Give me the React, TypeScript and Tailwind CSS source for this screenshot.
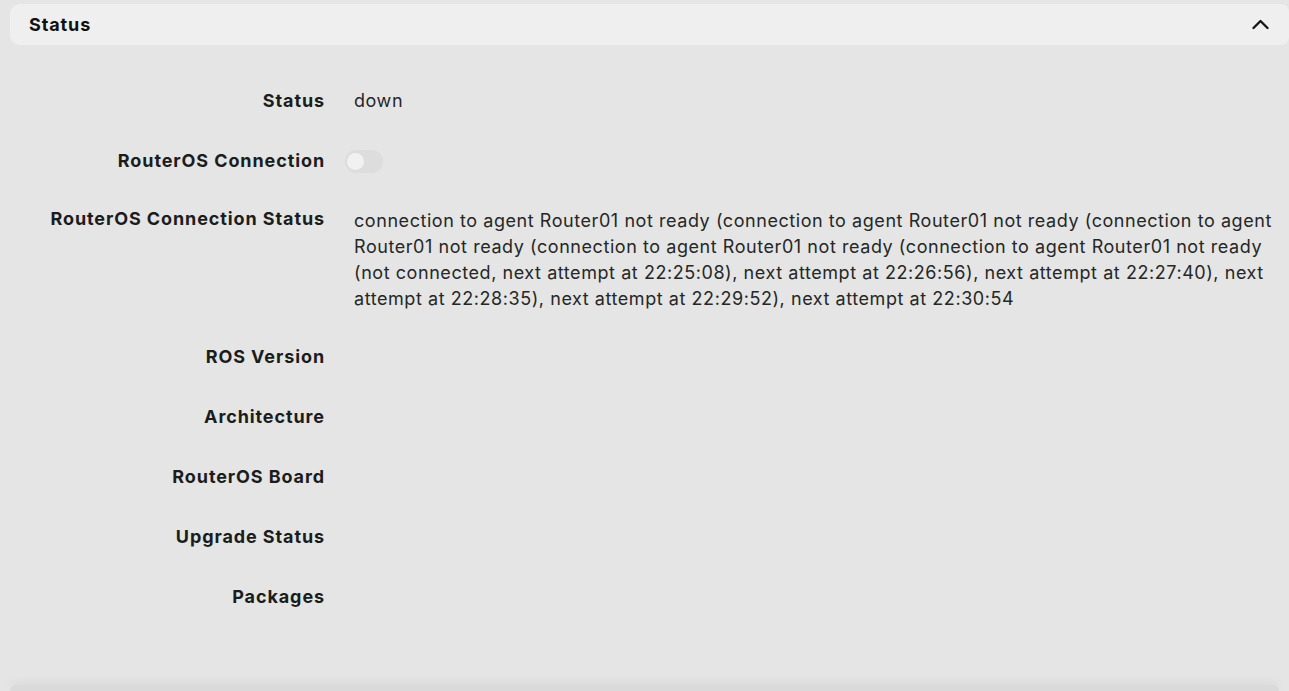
import { ReactNode } from "react";

const connectionStatus =
  "connection to agent Router01 not ready (connection to agent Router01 not ready (connection to agent Router01 not ready (connection to agent Router01 not ready (connection to agent Router01 not ready (not connected, next attempt at 22:25:08), next attempt at 22:26:56), next attempt at 22:27:40), next attempt at 22:28:35), next attempt at 22:29:52), next attempt at 22:30:54";

function Row({
  label,
  children,
  tall,
}: {
  label: string;
  children?: ReactNode;
  tall?: boolean;
}) {
  return (
    <div className={`flex gap-[29px] ${tall ? "items-start" : "items-center"}`}>
      <div
        className={`w-[315px] shrink-0 text-right text-[18px] font-bold tracking-[0.9px] text-[#1b1c1c] ${
          tall ? "leading-[26px]" : "leading-[30px]"
        }`}
      >
        {label}
      </div>
      <div className="min-w-0 flex-1 text-[18px] tracking-[0.56px] text-[#262727]">
        {children}
      </div>
    </div>
  );
}

export default function App() {
  return (
    <div
      className="flex h-[691px] flex-col overflow-hidden bg-[#e4e5e4]"
      style={{ fontFamily: "Inter, 'Noto Sans', sans-serif" }}
    >
      <div className="ml-[10px] mt-[4px] flex h-[41px] items-center justify-between rounded-l-[10px] rounded-r-[8px] bg-[#efefef] pl-[19px] pr-[20px]">
        <span className="text-[18px] font-bold tracking-[0.9px] text-[#111]">Status</span>
        <svg width="17" height="11" viewBox="0 0 17 11" fill="none">
          <polyline
            points="1.5,9 8.5,2 15.5,9"
            stroke="#151515"
            strokeWidth="2.3"
            strokeLinecap="round"
            strokeLinejoin="round"
          />
        </svg>
      </div>

      <div className="ml-[10px] mt-[41px] flex flex-col gap-[30px]">
        <Row label="Status">
          <span className="leading-[30px]">down</span>
        </Row>
        <Row label="RouterOS Connection">
          <div className="-ml-[9px] flex h-[30px] items-center">
            <div className="flex h-[23px] w-[38px] items-center rounded-full bg-[#dcdddc] px-[2px]">
              <div className="h-[17px] w-[17px] rounded-full bg-[#f1f1f1]" />
            </div>
          </div>
        </Row>
        <Row label="RouterOS Connection Status" tall>
          <p className="max-w-[925px] pt-[2px] leading-[26px]">{connectionStatus}</p>
        </Row>
        <Row label="ROS Version" />
        <Row label="Architecture" />
        <Row label="RouterOS Board" />
        <Row label="Upgrade Status" />
        <Row label="Packages" />
      </div>

      <div className="mx-[10px] mt-auto h-[6px] rounded-t-[10px] bg-[#d9dad9] shadow-[0_-3px_8px_rgba(0,0,0,0.06)]" />
    </div>
  );
}
